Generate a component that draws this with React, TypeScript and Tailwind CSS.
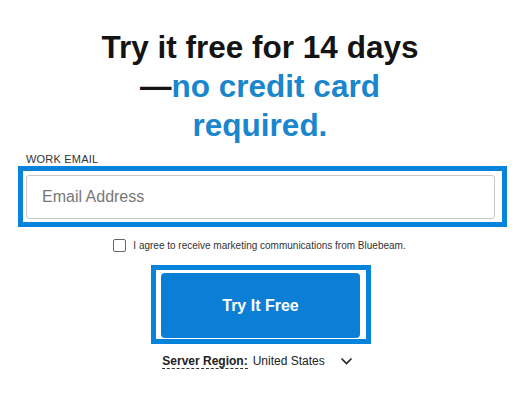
import React from "react";

export default function App() {
  return (
    <div className="w-[524px] h-[400px] bg-white font-['Liberation_Sans',Arial,sans-serif] overflow-hidden">
      <div className="ml-[18px] w-[489px] flex flex-col">
        <h1 className="mt-[28px] pr-[5px] text-[31.5px] leading-[39px] font-bold text-center text-[#141414]">
          Try it free for 14 days
          <br />
          —<span className="text-[#1a86cd]">no credit card</span>
          <br />
          <span className="text-[#1a86cd]">required.</span>
        </h1>
        <label className="mt-[8px] ml-[8px] text-[11px] leading-[13px] text-[#333] tracking-[0.2px]">WORK EMAIL</label>
        <div className="border-[5px] border-[#0683db] pl-[3px] pr-[7px] pt-[4px] pb-[3px]">
          <input
            className="w-[469px] h-[44px] border border-[#c9c9c9] rounded-[3px] pl-[15px] text-[16px] text-[#333] placeholder:text-[#777] outline-none bg-white"
            placeholder="Email Address"
          />
        </div>
        <div className="mt-[12px] flex items-center justify-center gap-[7px] pr-[6px]">
          <span className="w-[13px] h-[13px] border border-[#666] rounded-[2px] bg-white" />
          <span className="text-[10px] leading-[13px] text-[#333]">
            I agree to receive marketing communications from Bluebeam.
          </span>
        </div>
        <div className="mt-[13px] flex justify-center pr-[3px]">
          <div className="border-[5px] border-[#0683db] pl-[5px] pr-[6px] pt-[3px] pb-[1px]">
            <button className="w-[199px] h-[65px] rounded-[4px] bg-[#0b7fd6] text-white text-[16px] font-bold">
              Try It Free
            </button>
          </div>
        </div>
        <div className="mt-[9px] flex items-center justify-center pr-[10px] text-[12px] leading-[16px] text-[#222]">
          <span className="font-bold border-b border-dashed border-[#333] leading-[14px]">Server Region:</span>
          <span className="ml-[5px]">United States</span>
          <svg className="ml-[15px]" width="13" height="8" viewBox="0 0 13 8" fill="none">
            <path d="M1.5 1.5 L6.5 6.5 L11.5 1.5" stroke="#222" strokeWidth="1.6" />
          </svg>
        </div>
      </div>
    </div>
  );
}
